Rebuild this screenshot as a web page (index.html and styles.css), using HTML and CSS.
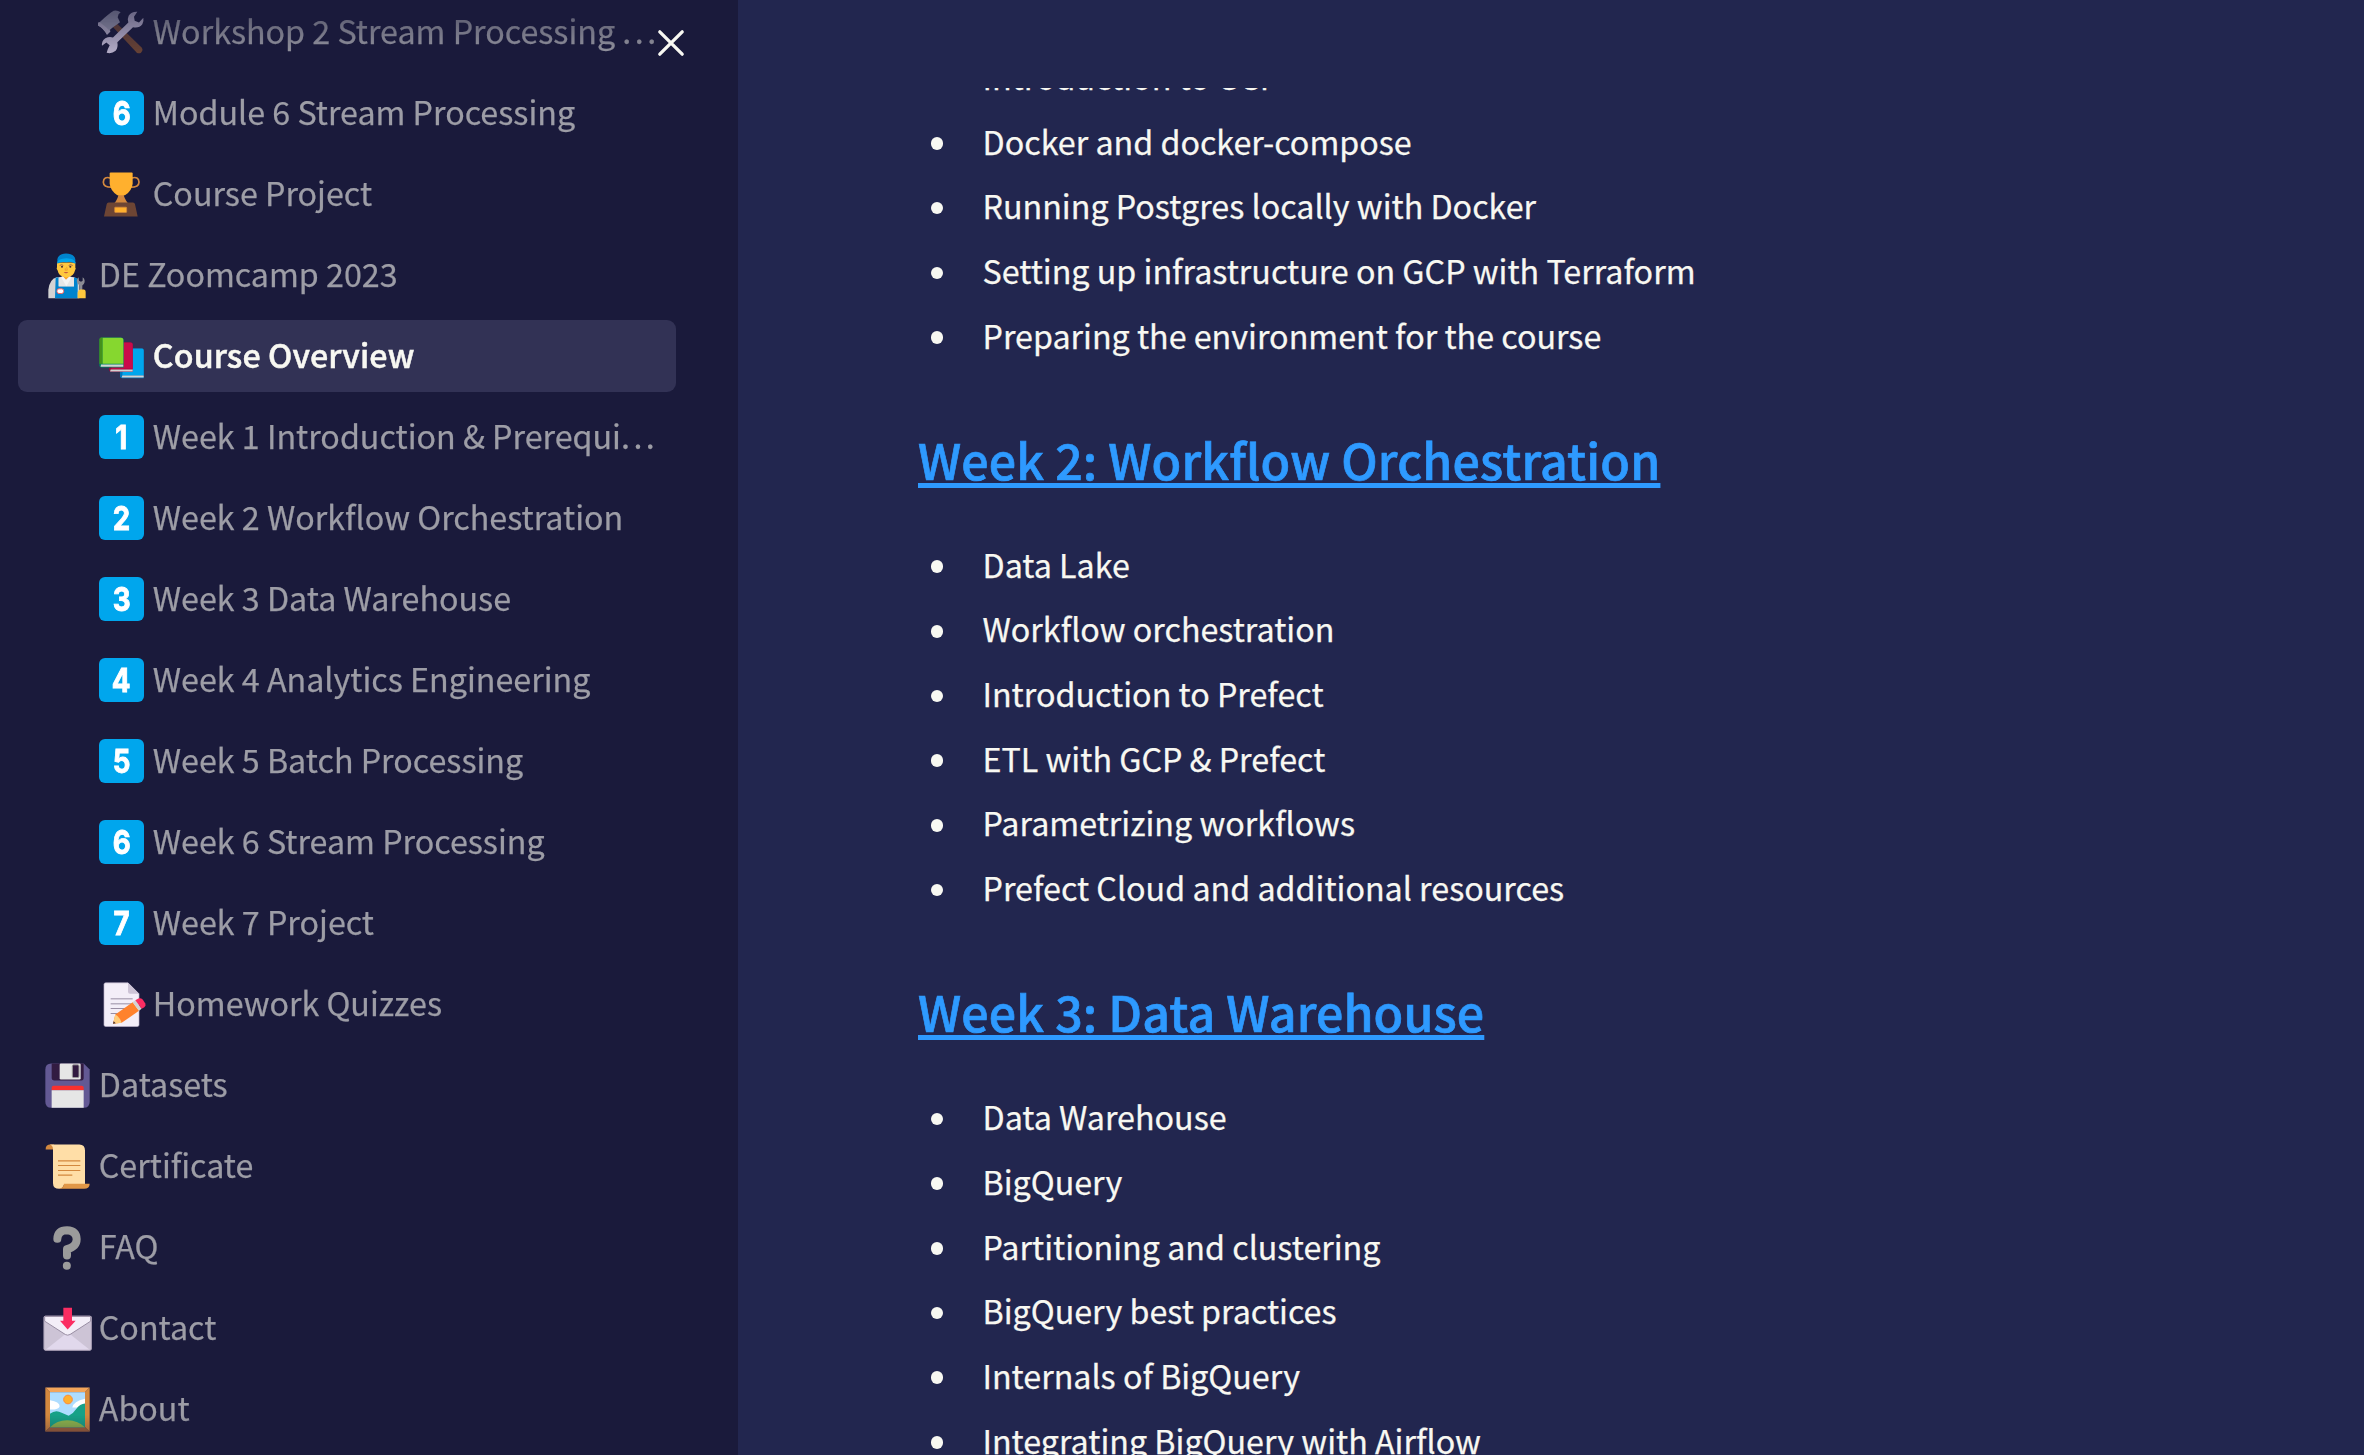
FILE: index.html
```
<!DOCTYPE html>
<html lang="en">
<head>
<meta charset="utf-8">
<title>Course Overview</title>
<link rel="stylesheet" href="styles.css">
</head>
<body>
<div class="app">
  <aside class="sidebar">
    <nav class="nav">
      <a class="nav-item child">
        <svg class="icon" viewBox="46 19.5 153 153">
          <path d="M96 79L108 68L182 140Q189 148 182 155Q175 162 167 155Z" fill="#6d4534"/>
          <path d="M52 67L57 65Q84 40 99 31Q109 28 120 35Q112 39 111 50L118 65L95 82L88 88L89 93L79 103Q70 85 52 75Z" fill="#9b9bb0"/>
          <path d="M52 67L57 65Q75 77 89 93L79 103Q70 85 52 75Z" fill="#b5aec5"/>
          <path d="M170 34Q152 33 144 46Q139 56 143 66L97 111Q86 107 74 113Q62 121 64 136L77 126L87 134L81 147L78 157Q93 161 105 151Q113 140 110 125L157 80Q175 84 185 71Q190 62 188 52L175 66L162 61L160 49Z" fill="#c0b8d2"/>
        </svg>
        <span class="label">Workshop 2 Stream Processing <span class="dots">...</span></span>
      </a>
      <a class="nav-item child"><span class="icon keycap"><b>6</b></span><span class="label">Module 6 Stream Processing</span></a>
      <a class="nav-item child">
        <svg class="icon" viewBox="16 25.5 153 153">
          <path d="M60 53Q39 46 38 65Q38 80 64 80M122 53Q144 46 145 65Q145 80 119 80" fill="none" stroke="#d3883e" stroke-width="5"/>
          <path d="M83 98H99Q99 112 112 128H71Q84 112 83 98Z" fill="#d3883e"/>
          <path d="M57 39Q57 36 60 36H123Q126 36 126 39V70Q123 93 103 104H80Q60 93 57 70Z" fill="#ffb02e"/>
          <path d="M54 126H127Q132 126 133 131L141 168H40L48 131Q49 126 54 126Z" fill="#6d4534"/>
          <rect x="72" y="140" width="36" height="16" rx="2" fill="#ffb02e" stroke="#d3883e" stroke-width="2"/>
        </svg>
        <span class="label">Course Project</span>
      </a>
      <a class="nav-item">
        <svg class="icon" viewBox="34 28.5 153 153">
          <path d="M53 173V148Q56 116 78 110H131Q141 114 146 124V173Z" fill="#d3d3d3"/>
          <path d="M75 112L84 110V138H130V110L141 114V173H73Z" fill="#0084ce"/>
          <path d="M96 100H117V113L106 119L96 113Z" fill="#ffa62b"/>
          <path d="M84 112L96 107L106 118L117 107L130 112V137H84Z" fill="#e6e6e6"/>
          <path d="M96 107L106 119L117 107L122 112L107 137L92 112Z" fill="#f4f4f4"/>
          <path d="M79 66H134V82Q137 83 133 90Q129 107 112 110H102Q84 107 81 90Q76 84 79 80Z" fill="#ffc83d"/>
          <path d="M80 66V56Q84 39 106 39Q130 39 134 56V70Q122 62 107 64Q90 62 80 70Z" fill="#0084ce"/>
          <path d="M79 67Q82 57 96 55Q107 51 119 55Q132 57 135 68Q121 62 107 65Q90 64 79 67Z" fill="#00a6ed"/>
          <path d="M87 75Q93 70 98 75M114 75Q120 70 126 75" fill="none" stroke="#a56953" stroke-width="3"/>
          <circle cx="94" cy="79" r="3" fill="#402a32"/><circle cx="119" cy="79" r="3" fill="#402a32"/>
          <path d="M104 83L103 89H110L108 79" fill="none" stroke="#e8912c" stroke-width="2"/>
          <path d="M99 95H113Q106 101 99 95Z" fill="#b03a45"/>
          <rect x="79" y="145" width="20" height="14" rx="6" fill="#fff" stroke="#f8655f" stroke-width="3"/>
          <path d="M144 110Q134 119 142 130L146 135V152H155V135Q166 126 160 114L156 110V121L151 124L145 121Z" fill="#8b8b93"/>
          <path d="M143 152Q143 147 149 147H160Q165 148 165 154V173H141V156Z" fill="#ffc83d"/>
        </svg>
        <span class="label">DE Zoomcamp 2023</span>
      </a>
      <a class="nav-item child active">
        <svg class="icon" viewBox="196 271.5 153 153">
          <path d="M275 325H335Q339 325 339 330V413H275Q268 413 268 407V330Z" fill="#0074ba"/>
          <path d="M283 324H335Q339 324 339 330V404H275Z" fill="#00a6ed"/>
          <path d="M275 405H339V411H273Z" fill="#d3d3d3"/>
          <path d="M242 306H300Q306 306 306 312V394H242Q235 394 235 388Z" fill="#990838"/>
          <path d="M250 306H300Q306 306 306 312V385H242Z" fill="#ca0b4a"/>
          <path d="M240 387H306V393H238Z" fill="#d3d3d3"/>
          <path d="M213 291H272Q279 292 279 298V381H212Q206 380 206 374V297Q207 291 213 291Z" fill="#008463"/>
          <path d="M211 291H216V370H206V297Q206 292 211 291Z" fill="#44911b"/>
          <path d="M216 292H271Q278 292 278 298V370H216Z" fill="#86d72f"/>
          <path d="M211 372H278V379H210Z" fill="#d3d3d3"/>
        </svg>
        <span class="label">Course Overview</span>
      </a>
      <a class="nav-item child"><span class="icon keycap"><b>1</b></span><span class="label">Week 1 Introduction &amp; Prerequi<span class="dots">...</span></span></a>
      <a class="nav-item child"><span class="icon keycap"><b>2</b></span><span class="label">Week 2 Workflow Orchestration</span></a>
      <a class="nav-item child"><span class="icon keycap"><b>3</b></span><span class="label">Week 3 Data Warehouse</span></a>
      <a class="nav-item child"><span class="icon keycap"><b>4</b></span><span class="label">Week 4 Analytics Engineering</span></a>
      <a class="nav-item child"><span class="icon keycap"><b>5</b></span><span class="label">Week 5 Batch Processing</span></a>
      <a class="nav-item child"><span class="icon keycap"><b>6</b></span><span class="label">Week 6 Stream Processing</span></a>
      <a class="nav-item child"><span class="icon keycap"><b>7</b></span><span class="label">Week 7 Project</span></a>
      <a class="nav-item child">
        <svg class="icon" viewBox="196 25.5 153 153">
          <path d="M225 37H292L325 70V163Q325 168 320 168H225Q220 168 220 163V42Q220 37 225 37Z" fill="#f3eef8" stroke="#bdb3c8" stroke-width="2"/>
          <path d="M292 37V64Q292 70 298 70H325Z" fill="#cdc4d6"/>
          <path d="M240 85H306M240 100H306M240 114H290M240 129H270" stroke="#998ea4" stroke-width="3"/>
          <path d="M247 160L254 132L306 95L325 121L273 157Z" fill="#ff822d"/>
          <path d="M247 160L254 132Q268 140 273 157Z" fill="#ffce7c"/>
          <path d="M247 160L249 152L255 158Z" fill="#402a32"/>
          <path d="M306 95L314 89L333 115L325 121Z" fill="#d3d3d3"/>
          <path d="M314 89L323 84Q330 81 336 87L344 99Q347 105 341 110L333 115Z" fill="#fb2d62"/>
        </svg>
        <span class="label">Homework Quizzes</span>
      </a>
      <a class="nav-item">
        <svg class="icon" viewBox="34 268.5 153 153">
          <path d="M62 279H159L177 297V394Q177 412 159 412H62Q44 412 44 394V297Q44 279 62 279Z" fill="#635994"/>
          <path d="M63 279H159V323Q159 330 152 330H71Q63 330 63 322Z" fill="#321b41"/>
          <rect x="87" y="279" width="63" height="48" rx="4" fill="#e6e6e6"/>
          <rect x="125" y="283" width="20" height="38" rx="4" fill="#321b41" stroke="#9b9b9b" stroke-width="3"/>
          <path d="M63 359V352Q63 346 69 346H153Q159 346 159 352V359Z" fill="#f8312f"/>
          <path d="M63 359H159V412H63Z" fill="#e6e6e6"/>
        </svg>
        <span class="label">Datasets</span>
      </a>
      <a class="nav-item">
        <svg class="icon" viewBox="34 511.5 153 153">
          <path d="M45 537Q44 522 60 522H70V537Z" fill="#d3883e"/>
          <path d="M56 522H146Q163 522 163 540V645H98Q96 655 86 655Q67 655 67 638V537Q67 524 56 522Z" fill="#ffdea7"/>
          <path d="M100 640H177Q177 655 160 655H84Q98 654 100 640Z" fill="#e19747"/>
          <path d="M82 571H149M82 585H149M82 600H149M82 614H125" stroke="#d3883e" stroke-width="3.5"/>
        </svg>
        <span class="label">Certificate</span>
      </a>
      <a class="nav-item">
        <svg class="icon" viewBox="34 754.5 153 153">
          <path d="M80 805Q81 779 109 779Q137 780 138 806Q138 828 109 836V855" fill="none" stroke="#9b9b9b" stroke-width="24" stroke-linecap="round" stroke-linejoin="round"/>
          <circle cx="108.500" cy="886" r="12" fill="#9b9b9b"/>
        </svg>
        <span class="label">FAQ</span>
      </a>
      <a class="nav-item">
        <svg class="icon" viewBox="34 997.5 153 153">
          <rect x="39" y="1036" width="144" height="104" rx="5" fill="#cdc4d6"/>
          <path d="M43 1139L111 1085L179 1139Z" fill="#e1d8ec"/>
          <path d="M42 1038H180V1052L118 1092Q111 1096 104 1092L42 1052Z" fill="#f3eef8" stroke="#998ea4" stroke-width="3"/>
          <rect x="40" y="1037" width="142" height="102" rx="5" fill="none" stroke="#a79db2" stroke-width="2"/>
          <path d="M98 1012H124V1051H135L111 1077L88 1051H98Z" fill="#fb2d62"/>
        </svg>
        <span class="label">Contact</span>
      </a>
      <a class="nav-item">
        <svg class="icon" viewBox="34 1240.5 153 153">
          <path d="M44 1251H177L163 1265H58Z" fill="#f3a55a"/>
          <path d="M44 1251L58 1265V1370L44 1384ZM177 1251L163 1265V1370L177 1384Z" fill="#d3883e"/>
          <path d="M44 1384L58 1370H163L177 1384Z" fill="#a56338"/>
          <rect x="58" y="1265" width="105" height="105" fill="#aeddff"/>
          <path d="M58 1289Q87 1293 87 1307Q84 1318 58 1317ZM163 1285Q128 1293 125 1311H163Z" fill="#fff"/>
          <circle cx="112" cy="1287" r="13" fill="#ffb02e" stroke="#ff8a35" stroke-width="3"/>
          <path d="M58 1330Q75 1316 93 1327L114 1336Q126 1331 136 1316Q148 1300 163 1299V1370H58Z" fill="#17a187"/>
          <path d="M58 1370Q80 1348 111 1349Q143 1350 163 1370Z" fill="#8fb54b"/>
        </svg>
        <span class="label">About</span>
      </a>
    </nav>
    <button class="close" aria-label="Close sidebar">
      <svg viewBox="0 0 28 28"><path d="M2.800 2.800L25.200 25.200M25.200 2.800L2.800 25.200"/></svg>
    </button>
  </aside>
  <main class="main">
    <div class="content">
      <ul>
        <li>Introduction to GCP</li>
        <li>Docker and docker-compose</li>
        <li>Running Postgres locally with Docker</li>
        <li>Setting up infrastructure on GCP with Terraform</li>
        <li>Preparing the environment for the course</li>
      </ul>
      <h3><a>Week 2: Workflow Orchestration</a></h3>
      <ul>
        <li>Data Lake</li>
        <li>Workflow orchestration</li>
        <li>Introduction to Prefect</li>
        <li>ETL with GCP &amp; Prefect</li>
        <li>Parametrizing workflows</li>
        <li>Prefect Cloud and additional resources</li>
      </ul>
      <h3><a>Week 3: Data Warehouse</a></h3>
      <ul>
        <li>Data Warehouse</li>
        <li>BigQuery</li>
        <li>Partitioning and clustering</li>
        <li>BigQuery best practices</li>
        <li>Internals of BigQuery</li>
        <li>Integrating BigQuery with Airflow</li>
      </ul>
    </div>
  </main>
</div>
</body>
</html>
```
FILE: styles.css
```
* { box-sizing: border-box; }

body {
  margin: 0;
  background: #22264f;
  color: #f8f8f2;
  font-family: "Noto Sans CJK SC", "Noto Sans", sans-serif;
  font-size: 32.240px;
  -webkit-text-stroke: .25px currentColor;
}

.app {
  display: flex;
  height: 1455px;
  overflow: hidden;
}

/* Sidebar */
.sidebar {
  position: relative;
  flex: none;
  width: 738px;
  background: #1a1a3b;
}

.nav {
  display: flex;
  flex-direction: column;
  gap: 9px;
  height: 1455px;
  padding: 0 62px 0 18px;
  overflow: hidden;
  -webkit-mask-image: linear-gradient(rgba(0, 0, 0, .35), #000 60px, #000 calc(100% - 40px), rgba(0, 0, 0, .35));
  mask-image: linear-gradient(rgba(0, 0, 0, .35), #000 60px, #000 calc(100% - 40px), rgba(0, 0, 0, .35));
}

.nav-item {
  display: flex;
  flex: none;
  align-items: center;
  gap: 6px;
  height: 72px;
  padding-left: 23.800px;
  border-radius: 9px;
  color: #9d9da6;
}

.nav-item:first-child { margin-top: -4px; }
.nav-item.child { padding-left: 77.800px; }

.nav-item.active {
  background: #323255;
  color: #f8f8f2;
  font-weight: 500;
  letter-spacing: .1px;
  -webkit-text-stroke: .5px currentColor;
}

.icon {
  flex: none;
  width: 51px;
  height: 51px;
}

.keycap {
  display: flex;
  align-items: center;
  justify-content: center;
  width: 45px;
  height: 44px;
  margin: 0 3px;
  border-radius: 6px;
  background: #00a6ed;
  color: #fff;
  font: 700 33px/44px Inter, sans-serif;
}

.keycap b {
  font-weight: 700;
  transform: scaleX(.84);
  -webkit-text-stroke: .9px #fff;
}

.label {
  padding-bottom: 3px;
  line-height: 47px;
  white-space: nowrap;
}

.dots { letter-spacing: 3.500px; }

.close {
  position: absolute;
  top: 28.500px;
  left: 657.300px;
  width: 28px;
  height: 28px;
  padding: 0;
  border: 0;
  background: none;
}

.close svg {
  display: block;
  width: 28px;
  height: 28px;
  fill: none;
  stroke: #f8f8f2;
  stroke-width: 3.300;
  stroke-linecap: round;
}

/* Main column */
.main {
  flex: 1;
  padding-top: 88px;
}

.content {
  height: 1367px;
  padding-left: 180px;
  overflow: hidden;
}

ul {
  margin: 0;
  padding: 0 0 0 12.500px;
  list-style: none;
}

ul:first-child { margin-top: -44px; }

li {
  display: flex;
  align-items: center;
  gap: 39.500px;
  height: 64.700px;
  line-height: 64.700px;
}

li::before {
  content: "";
  width: 12.500px;
  height: 12.500px;
  margin-top: 5px;
  border-radius: 50%;
  background: #f8f8f2;
}

h3 {
  margin: 61.200px 0 43.100px;
  font-size: 48.300px;
  font-weight: 500;
  line-height: 60px;
  letter-spacing: .13px;
}

h3 a {
  color: #2e9aff;
  -webkit-text-stroke: .7px currentColor;
  text-decoration: underline;
  text-decoration-thickness: 5px;
  text-underline-offset: 3px;
  text-decoration-skip-ink: none;
}
```
